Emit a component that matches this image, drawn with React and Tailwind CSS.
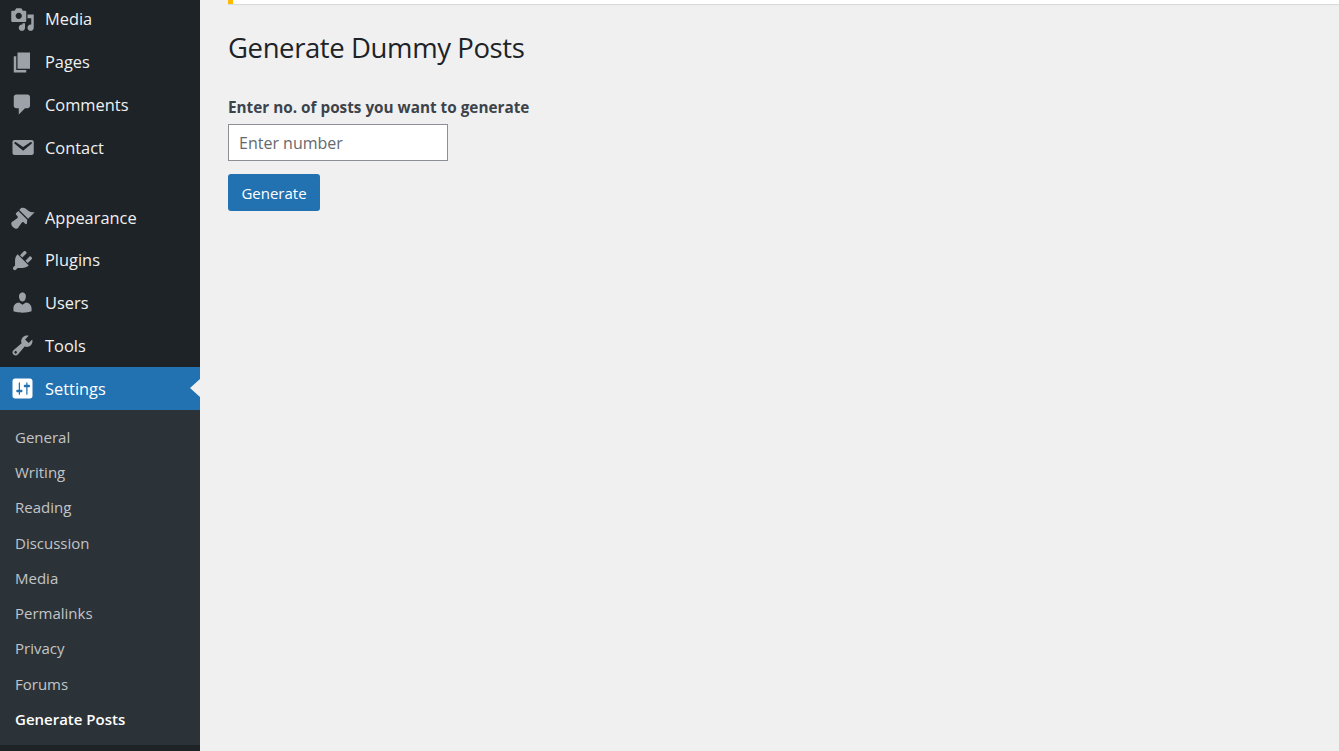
const ICONS = {
  media: "M13 11V4c0-.55-.45-1-1-1h-1.67L9 1H5L3.67 3H2c-.55 0-1 .45-1 1v7c0 .55.45 1 1 1h10c.55 0 1-.45 1-1zM7 4.5c1.38 0 2.5 1.12 2.5 2.5S8.38 9.5 7 9.5 4.5 8.38 4.5 7 5.62 4.5 7 4.5zM14 6h5v10.5c0 1.38-1.12 2.5-2.5 2.5S14 17.88 14 16.5s1.12-2.5 2.5-2.5c.17 0 .34.02.5.05V9h-3V6zm-4 8.05V13h2v3.5c0 1.38-1.12 2.5-2.5 2.5S7 17.88 7 16.5 8.12 14 9.5 14c.17 0 .34.02.5.05z",
  pages: "M6 15V2h10v13H6zm-1 1h8v2H3V5h2v11z",
  comments: "M5 2h9c1.1 0 2 .9 2 2v7c0 1.1-.9 2-2 2h-2l-5 5v-5H5c-1.1 0-2-.9-2-2V4c0-1.1.9-2 2-2z",
  email: "M3.87 4h13.25C18.37 4 19 4.59 19 5.79v8.42c0 1.19-.63 1.79-1.88 1.79H3.87c-1.25 0-1.88-.6-1.88-1.79V5.79c0-1.2.63-1.79 1.88-1.79zm6.62 8.6l6.74-5.53c.24-.2.43-.66.13-1.07-.29-.41-.82-.42-1.17-.17l-5.7 3.86L4.8 5.83c-.35-.25-.88-.24-1.17.17-.3.41-.11.87.13 1.07z",
  appearance: "M14.48 11.06L7.41 3.99l1.5-1.5c.5-.56 2.3-.47 3.51.32 1.21.8 1.43 1.28 2.91 2.1 1.18.64 2.45 1.26 4.45.85zm-.71.71L6.7 4.7 4.93 6.47c-.39.39-.39 1.02 0 1.41l1.06 1.06c.39.39.39 1.03 0 1.42-.6.6-1.43 1.11-2.21 1.69-.35.26-.7.53-1.01.84C1.43 13.23.91 14.27 1.06 15.4c.21 1.6 1.91 3.3 3.51 3.51 1.13.15 2.17-.37 2.53-1.71.31-.31.58-.66.84-1.01.58-.78 1.09-1.61 1.69-2.21.39-.39 1.03-.39 1.42 0l1.06 1.06c.39.39 1.02.39 1.41 0z",
  plugins: "M13.11 4.36L9.87 7.6 8 5.73l3.24-3.24c.35-.34 1.05-.2 1.56.32.52.51.66 1.21.31 1.55zm-8 1.77l.91-1.12 9.01 9.01-1.19.84c-.71.71-2.63 1.16-3.82 1.16H6.14L4.9 17.26c-.59.59-1.54.59-2.12 0-.59-.58-.59-1.53 0-2.12l1.24-1.24v-3.88c0-1.13.4-3.19 1.09-3.89zm7.26 3.97l3.24-3.24c.34-.35 1.04-.21 1.55.31.52.51.66 1.21.31 1.55l-3.24 3.25z",
  users: "M10 9.25c-2.27 0-2.73-3.44-2.73-3.44C7 4.02 7.82 2 9.97 2c2.16 0 2.98 2.02 2.71 3.81 0 0-.41 3.44-2.68 3.44zm0 2.57L12.72 10c2.39 0 4.52 2.33 4.52 4.53v2.49s-3.65 1.13-7.24 1.13c-3.65 0-7.24-1.13-7.24-1.13v-2.49c0-2.25 1.94-4.48 4.47-4.48z",
  tools: "M16.68 9.77c-1.34 1.34-3.3 1.67-4.95.99l-5.41 6.52c-.99.99-2.59.99-3.58 0s-.99-2.59 0-3.57l6.52-5.42c-.68-1.65-.35-3.61.99-4.95 1.28-1.28 3.12-1.62 4.72-1.06l-2.89 2.89 2.82 2.82 2.86-2.87c.53 1.58.18 3.39-1.08 4.65zM3.81 16.21c.4.39 1.04.39 1.43 0 .4-.4.4-1.04 0-1.43-.39-.4-1.03-.4-1.43 0-.39.39-.39 1.03 0 1.43z",
  settings: "M18 16V4c0-1.1-.9-2-2-2H4c-1.1 0-2 .9-2 2v12c0 1.1.9 2 2 2h12c1.1 0 2-.9 2-2zM8 11h1c.55 0 1 .45 1 1s-.45 1-1 1H8v1.5c0 .28-.22.5-.5.5s-.5-.22-.5-.5V13H6c-.55 0-1-.45-1-1s.45-1 1-1h1V5.5c0-.28.22-.5.5-.5s.5.22.5.5V11zm5-2h-1c-.55 0-1-.45-1-1s.45-1 1-1h1V5.5c0-.28.22-.5.5-.5s.5.22.5.5V7h1c.55 0 1 .45 1 1s-.45 1-1 1h-1v5.5c0 .28-.22.5-.5.5s-.5-.22-.5-.5V9z",
};

function Icon({ name, className }) {
  return (
    <svg viewBox="0 0 20 20" className={className} fill="currentColor">
      <path d={ICONS[name]} />
    </svg>
  );
}

function MenuItem({ icon, label }) {
  return (
    <div className="flex h-[42.8px] items-center pl-[10px] text-[#f0f0f1]">
      <Icon name={icon} className="h-[25px] w-[25px] shrink-0 text-[#9ca2a7]" />
      <span className="ml-[10px] pt-[1px]">{label}</span>
    </div>
  );
}

const SUB = ["General", "Writing", "Reading", "Discussion", "Media", "Permalinks", "Privacy", "Forums"];

export default function App() {
  return (
    <div className="flex h-[751px] overflow-hidden bg-[#f0f0f1] font-['Open_Sans','Liberation_Sans',sans-serif]">
      <aside className="flex h-full w-[200px] shrink-0 flex-col bg-[#1d2327] text-[16.4px]">
        <div className="-mt-[2.2px]">
          <MenuItem icon="media" label="Media" />
          <MenuItem icon="pages" label="Pages" />
          <MenuItem icon="comments" label="Comments" />
          <MenuItem icon="email" label="Contact" />
        </div>
        <div className="mt-[27px]">
          <MenuItem icon="appearance" label="Appearance" />
          <MenuItem icon="plugins" label="Plugins" />
          <MenuItem icon="users" label="Users" />
          <MenuItem icon="tools" label="Tools" />
        </div>
        <div className="relative flex h-[43px] items-center bg-[#2271b1] pl-[10px] text-white">
          <Icon name="settings" className="h-[25px] w-[25px] shrink-0" />
          <span className="ml-[10px] pt-[1px]">Settings</span>
          <div className="absolute right-0 top-[12px] h-0 w-0 border-y-[9px] border-r-[10px] border-y-transparent border-r-[#f0f0f1]" />
        </div>
        <div className="flex h-[335px] flex-col bg-[#2c3338] pt-[9.3px] text-[15px] text-[#c3c4c7]">
          {SUB.map((s) => (
            <div key={s} className="flex h-[35.25px] items-center pl-[15px]">{s}</div>
          ))}
          <div className="flex h-[35.25px] items-center pl-[15px] font-semibold text-white">Generate Posts</div>
        </div>
      </aside>
      <main className="min-w-0 flex-1 pl-[28px]">
        <div className="flex h-[4px] bg-white shadow-[0_1px_1px_rgba(0,0,0,0.1)]">
          <div className="h-full w-[5px] bg-[#ffb900]" />
        </div>
        <h1 className="mt-[25px] text-[27.5px] leading-[38px] tracking-[-0.4px] text-[#1d2327]">Generate Dummy Posts</h1>
        <div className="mt-[28px] text-[15.3px] font-bold leading-[24px] text-[#3c434a]">Enter no. of posts you want to generate</div>
        <input
          placeholder="Enter number"
          className="mt-[5px] block h-[37px] w-[220px] border border-[#8c8f94] bg-white px-[10px] pt-[1px] text-[16px] outline-none placeholder:text-[#646970]"
        />
        <button className="mt-[13px] block h-[37px] w-[92px] rounded-[3px] bg-[#2271b1] pt-[1px] text-[15px] text-white">Generate</button>
      </main>
    </div>
  );
}
